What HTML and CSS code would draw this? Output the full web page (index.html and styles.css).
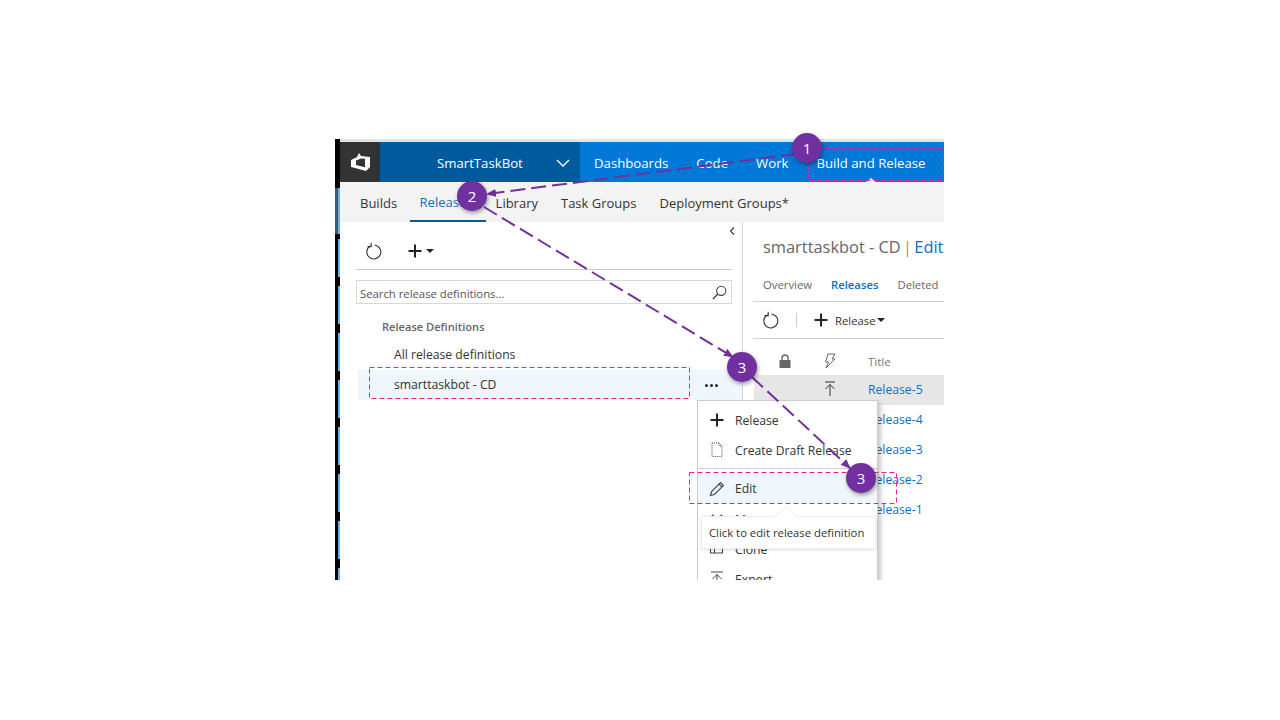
FILE: index.html
```html
<!DOCTYPE html>
<html lang="en">
<head>
<meta charset="utf-8">
<title>Build and Release</title>
<link rel="stylesheet" href="styles.css">
</head>
<body>
<div class="shot">
  <div class="edge"><div class="edge-top"></div><div class="edge-mid"></div><div class="edge-rest"></div></div>
  <div class="main">
    <div class="topline"></div>
    <nav class="nav">
      <div class="logo">
        <svg width="22" height="22" viewBox="0 0 22 22"><path d="M10 2 L12 5 L21 6 V16 L17 20 L6 17 L2 16 V9 L8 6 Z M7 9.5 V14 L16 16.2 V7.8 L12 7.5 Z" fill="#fff" fill-rule="evenodd"/></svg>
      </div>
      <div class="project"><span class="project-name">SmartTaskBot</span>
        <svg class="project-chev" width="14" height="8" viewBox="0 0 14 8"><path d="M1 1 L7 7 L13 1" fill="none" stroke="#fff" stroke-width="1.4"/></svg>
      </div>
      <div class="hubs">
        <span class="hub">Dashboards</span><span class="hub">Code</span><span class="hub">Work</span><span class="hub hub-active">Build and Release</span>
      </div>
    </nav>
    <div class="subnav">
      <span class="tab">Builds</span><span class="tab tab-active">Releases</span><span class="tab">Library</span><span class="tab">Task Groups</span><span class="tab">Deployment Groups*</span>
    </div>
    <div class="content">
      <section class="left">
        <div class="collapse"><svg width="6" height="8" viewBox="0 0 6 8"><path d="M5 0.5 L1.5 4 L5 7.5" fill="none" stroke="#444" stroke-width="1.2"/></svg></div>
        <div class="left-tools">
          <svg class="refresh" width="16" height="18" viewBox="0 0 16 18"><path d="M4.5 3.8 A7 7 0 1 0 8.5 3" fill="none" stroke="#333" stroke-width="1.1"/><path d="M5.2 0.8 V4.6 H1.6" fill="none" stroke="#333" stroke-width="1.1"/></svg>
          <svg class="plus" width="14" height="14" viewBox="0 0 14 14"><path d="M7 0.5 V13.5 M0.5 7 H13.5" stroke="#222" stroke-width="2"/></svg>
          <span class="caret"></span>
        </div>
        <div class="search"><span class="search-text">Search release definitions...</span>
          <svg width="15" height="15" viewBox="0 0 15 15"><circle cx="9.2" cy="5.8" r="4.6" fill="none" stroke="#444" stroke-width="1.1"/><path d="M5.8 9 L1 14" stroke="#444" stroke-width="1.4"/></svg>
        </div>
        <div class="tree-title">Release Definitions</div>
        <div class="tree-item">All release definitions</div>
        <div class="tree-item tree-selected"><span>smarttaskbot - CD</span><span class="dots"><i></i><i></i><i></i></span></div>
      </section>
      <section class="right">
        <h1 class="title">smarttaskbot - CD <span class="pipe">|</span> <span class="edit">Edit</span></h1>
        <div class="tabs"><span>Overview</span><span class="tabs-active">Releases</span><span>Deleted</span></div>
        <div class="right-tools">
          <svg class="refresh" width="16" height="18" viewBox="0 0 16 18"><path d="M4.5 3.8 A7 7 0 1 0 8.5 3" fill="none" stroke="#333" stroke-width="1.1"/><path d="M5.2 0.8 V4.6 H1.6" fill="none" stroke="#333" stroke-width="1.1"/></svg>
          <span class="tool-sep"></span>
          <svg width="14" height="14" viewBox="0 0 14 14"><path d="M7 0.5 V13.5 M0.5 7 H13.5" stroke="#222" stroke-width="2"/></svg>
          <span class="tool-label">Release</span><span class="caret caret-tight"></span>
        </div>
        <div class="table">
          <div class="row head">
            <span class="cell-a"><svg width="12" height="14" viewBox="0 0 12 14"><path d="M3 6 V4 A3 3 0 0 1 9 4 V6" fill="none" stroke="#666" stroke-width="1.4"/><rect x="0.5" y="6" width="11" height="8" fill="#666"/></svg></span>
            <span class="cell-b"><svg width="12" height="16" viewBox="0 0 12 16"><path d="M4 1 H11 L8 6 H11 L2 15 L4.5 9 H1.5 Z" fill="none" stroke="#666" stroke-width="1"/></svg></span>
            <span class="cell-t">Title</span>
          </div>
          <div class="row row-sel">
            <span class="cell-a"></span>
            <span class="cell-b"><svg width="12" height="16" viewBox="0 0 12 16"><path d="M1 1 H11" stroke="#333" stroke-width="1"/><path d="M6 15 V3.5 M1.5 8 L6 3.5 L10.5 8" fill="none" stroke="#333" stroke-width="1"/></svg></span>
            <a class="cell-t link">Release-5</a>
          </div>
          <div class="row"><span class="cell-a"></span><span class="cell-b"></span><a class="cell-t link">Release-4</a></div>
          <div class="row"><span class="cell-a"></span><span class="cell-b"></span><a class="cell-t link">Release-3</a></div>
          <div class="row"><span class="cell-a"></span><span class="cell-b"></span><a class="cell-t link">Release-2</a></div>
          <div class="row"><span class="cell-a"></span><span class="cell-b"></span><a class="cell-t link">Release-1</a></div>
        </div>
      </section>
    </div>
  </div>

  <div class="menu">
    <div class="menu-item"><svg width="14" height="14" viewBox="0 0 14 14"><path d="M7 0.5 V13.5 M0.5 7 H13.5" stroke="#222" stroke-width="2"/></svg><span>Release</span></div>
    <div class="menu-item"><svg width="14" height="16" viewBox="0 0 14 16"><path d="M2 1 H9 L12 4 V14.5 H2 Z M9 1 V4 H12" fill="none" stroke="#555" stroke-width="1" stroke-dasharray="1 1"/></svg><span>Create Draft Release</span></div>
    <div class="menu-sep"></div>
    <div class="menu-item menu-hover"><svg width="16" height="16" viewBox="0 0 16 16"><path d="M1.5 14.5 L2.5 10.5 L11.5 1.5 L14.5 4.5 L5.5 13.5 Z M10 3 L13 6" fill="none" stroke="#444" stroke-width="1.1"/></svg><span>Edit</span></div>
    <div class="menu-item"><svg class="icon-low" width="14" height="14" viewBox="0 0 14 14"><path d="M2 2 L12 12 M12 2 L2 12" stroke="#d9302c" stroke-width="2"/></svg><span>Manage</span></div>
    <div class="menu-item"><svg width="15" height="14" viewBox="0 0 15 14"><path d="M1 5 V11 H5 M5 2 H8 M5 5 V11 H13 V5 H9" fill="none" stroke="#444" stroke-width="1.1"/></svg><span>Clone</span></div>
    <div class="menu-item"><svg width="14" height="16" viewBox="0 0 14 16"><path d="M1 1 H13" stroke="#444" stroke-width="1"/><path d="M7 15 V3.5 M2.5 8 L7 3.5 L11.5 8" fill="none" stroke="#444" stroke-width="1"/></svg><span>Export</span></div>
  </div>
  <div class="tooltip">Click to edit release definition</div>

  <svg class="arrows" width="609" height="441" viewBox="335 139 609 441">
    <defs><marker id="head" markerWidth="10" markerHeight="8" refX="9" refY="4" orient="auto" markerUnits="userSpaceOnUse"><path d="M0 0 L10 4 L0 8 Z" fill="#7030a0"/></marker></defs>
    <rect class="mark" x="808.5" y="148.5" width="135" height="32"/>
    <rect class="mark" x="369.5" y="367.5" width="320" height="31"/>
    <rect class="mark" x="689.5" y="472.5" width="207" height="31"/>
    <path class="flow" d="M796 154 L487 194" marker-end="url(#head)"/>
    <path class="flow" d="M484 207 L733 357" marker-end="url(#head)"/>
    <path class="flow" d="M752 377 L850 468" marker-end="url(#head)"/>
  </svg>

  <span class="badge badge-1">1</span>
  <span class="badge badge-2">2</span>
  <span class="badge badge-3">3</span>
  <span class="badge badge-4">3</span>
</div>
</body>
</html>
```
FILE: styles.css
```css
* { box-sizing: border-box; }
html, body { margin: 0; padding: 0; background: #fff; }
body { height: 720px; overflow: hidden; font-family: "Open Sans", "Noto Sans", sans-serif; font-size: 12px; color: #333; }

.shot { position: relative; display: flex; width: 609px; height: 441px; margin: 139px 0 0 335px; clip-path: inset(-10px 0 0 0); background: #fff; }

.edge { width: 5px; flex: none; display: flex; flex-direction: column; }
.edge-top { height: 49px; background: #000; }
.edge-mid { height: 46px; background: linear-gradient(90deg, #3d5a70 0 3px, #6cb0ea 3px 5px); }
.edge-rest { flex: 1; background: linear-gradient(90deg, #000 0 3px, transparent 3px), repeating-linear-gradient(180deg, #000 0 5px, #6cb0ea 5px 43px, #000 43px 47px); }

.main { flex: 1; min-width: 0; display: flex; flex-direction: column; }
.topline { height: 3px; background: #e4e4e4; flex: none; }

.nav { height: 40px; flex: none; display: flex; color: #fff; font-size: 13.2px; }
.logo { width: 40px; background: #333; display: flex; align-items: center; justify-content: center; }
.project { width: 200px; background: #005a9e; display: flex; align-items: center; padding: 1px 0 0 57px; }
.project-name { width: 119px; }
.project-chev { flex: none; }
.hubs { flex: 1; background: #0078d7; display: flex; align-items: center; gap: 28px; padding: 1px 0 0 14px; position: relative; }
.hub { white-space: nowrap; }
.hub-active { position: relative; }
.hub-active::after { content: ""; position: absolute; left: 50%; margin-left: -6px; bottom: -11px; border: 6px solid transparent; border-top: 0; border-bottom: 5px solid #f3f3f3; }

.subnav { height: 40px; flex: none; background: #f3f3f3; display: flex; align-items: stretch; padding-left: 8.5px; font-size: 13px; }
.tab { padding: 1px 11.5px 0; display: flex; align-items: center; white-space: nowrap; color: #333; }
.tab-active { color: #106ebe; border-bottom: 2px solid #005a9e; width: 76px; padding: 1px 10px 0; margin: 0 -1.5px 0 1px; }

.content { flex: 1; display: flex; min-height: 0; }
.left { width: 403px; flex: none; border-right: 1px solid #d8d8d8; padding: 0 10px 0 16px; position: relative; }
.collapse { position: absolute; right: 7px; top: 5px; line-height: 0; }
.left-tools { height: 48px; display: flex; align-items: center; border-bottom: 1px solid #c8c8c8; padding: 10px 0 0 10px; }
.left-tools .plus { margin-left: 26px; }
.caret { display: inline-block; margin-left: 4px; border: 4px solid transparent; border-top: 4px solid #222; border-bottom: 0; }
.caret-tight { margin-left: 1px; }
.search { height: 24px; margin-top: 10px; border: 1px solid #d8d8d8; display: flex; align-items: center; justify-content: space-between; padding: 0 4px 0 3px; }
.search-text { color: #555; font-size: 11.3px; padding-top: 2px; }
.tree-title { margin: 14px 0 0 26px; height: 18px; line-height: 18px; font-weight: 600; font-size: 11.1px; color: #666; }
.tree-item { height: 30px; display: flex; align-items: center; padding-left: 38px; font-size: 12.2px; color: #333; margin-top: 3px; }
.tree-item + .tree-item { margin-top: 1px; }
.tree-selected { background: #eff6fc; margin-left: 2px; margin-right: -10px; padding: 0 24px 2px 36px; justify-content: space-between; }
.dots { display: flex; gap: 2px; }
.dots i { width: 3px; height: 3px; border-radius: 50%; background: #222; margin-top: 2px; }

.right { flex: 1; min-width: 0; padding-left: 10px; }
.title { margin: 0; padding: 12px 0 0 10px; height: 50px; font-size: 16.4px; line-height: 26px; font-weight: 400; color: #666; white-space: nowrap; }
.pipe { color: #d9822b; margin: 0 -2px; }
.edit { color: #106ebe; }
.tabs { height: 30px; display: flex; gap: 19px; padding: 5px 0 0 10px; align-items: flex-start; border-bottom: 1px solid #d0d0d0; font-size: 11.3px; color: #666; white-space: nowrap; }
.tabs-active { color: #106ebe; font-weight: 600; }
.right-tools { height: 37px; display: flex; align-items: center; padding-left: 10px; border-bottom: 1px solid #d0d0d0; }
.tool-sep { width: 1px; height: 14px; background: #ccc; margin: 0 17px 0 17px; }
.tool-label { margin-left: 7px; font-size: 11.3px; }

.table { padding-top: 8px; }
.row { height: 30px; display: flex; align-items: center; font-size: 12.2px; margin-left: 1px; padding-bottom: 2px; }
.head { height: 28px; color: #777; font-size: 11.5px; padding-bottom: 0; }
.row-sel { background: #e6e6e6; }
.cell-a { width: 45px; flex: none; display: flex; justify-content: center; padding-left: 17px; }
.cell-b { width: 45px; flex: none; display: flex; justify-content: center; padding-left: 16px; }
.cell-t { margin-left: 24px; white-space: nowrap; }
.link { color: #106ebe; }

.menu { position: absolute; left: 362px; top: 261px; width: 181px; background: #fff; border: 1px solid #ccc; box-shadow: 3px 3px 4px rgba(0,0,0,.2); font-size: 12.2px; color: #333; }
.menu-item { height: 30px; display: flex; align-items: center; padding-left: 11px; white-space: nowrap; }
.menu-item svg { width: 16px; flex: none; margin-right: 10px; }
.menu-item:first-child { margin-top: 4px; }
.menu-sep { height: 1px; background: #ccc; margin: 3px 0 4px 0; }
.menu-hover { background: #eff6fc; margin-bottom: 1px; padding-top: 1px; }
.menu-item .icon-low { margin-top: 2px; }

.tooltip { position: absolute; left: 366px; top: 377px; width: 175px; height: 33px; background: #fff; border: 1px solid #eee; box-shadow: 0 1px 3px rgba(0,0,0,.12); display: flex; align-items: center; padding-left: 7px; font-size: 11.3px; color: #333; white-space: nowrap; }
.tooltip::before { content: ""; position: absolute; left: 76px; top: -11px; width: 15px; height: 15px; background: #fff; transform: translateY(3px) rotate(45deg); border-left: 1px solid #eee; border-top: 1px solid #eee; }

.arrows { position: absolute; left: 0; top: 0; pointer-events: none; }
.mark { fill: none; stroke: #e6219f; stroke-width: 1; stroke-dasharray: 5 3; }
.flow { fill: none; stroke: #7030a0; stroke-width: 2; stroke-dasharray: 15 6; }

.badge { position: absolute; width: 30px; height: 30px; border-radius: 50%; background: #7030a0; color: #fff; display: flex; align-items: center; justify-content: center; font-size: 15px; box-shadow: 1px 2px 4px rgba(0,0,0,.4); }
.badge-1 { left: 457px; top: -6px; }
.badge-2 { left: 122px; top: 42px; }
.badge-3 { left: 392px; top: 213px; }
.badge-4 { left: 511px; top: 324px; }
```
